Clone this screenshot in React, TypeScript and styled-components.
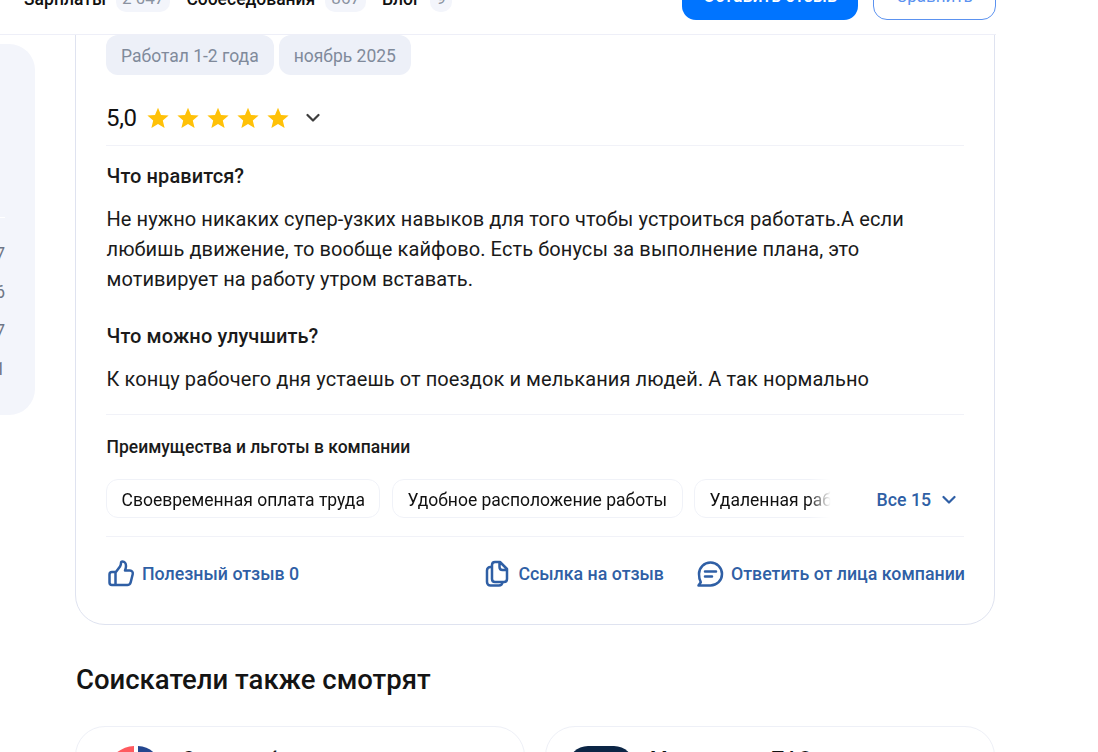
import React from "react";
import styled, { createGlobalStyle } from "styled-components";

const benefits = [
  "Своевременная оплата труда",
  "Удобное расположение работы",
  "Удаленная работа",
];

const tabs = [
  { name: "Зарплаты", count: "2 047" },
  { name: "Собеседования", count: "867" },
  { name: "Блог", count: "9" },
];

const Star = () => (
  <svg width="22" height="22" viewBox="0 0 22 22">
    <path
      d="M11 .8l3 7.100 7.600.6-5.800 5 1.800 7.500L11 16.900 4.400 21l1.800-7.500-5.800-5L8 7.900z"
      fill="#ffc107"
    />
  </svg>
);

const Chevron = ({ color }: { color: string }) => (
  <svg width="14" height="10" viewBox="0 0 14 10" fill="none">
    <path
      d="M1.500 2l5.500 5.500L12.500 2"
      stroke={color}
      strokeWidth="2.200"
      strokeLinecap="round"
      strokeLinejoin="round"
    />
  </svg>
);

const ThumbIcon = () => (
  <svg width="28" height="28" viewBox="0 0 28 28" fill="none">
    <path
      d="M8.500 12.500l4.500-6c.6-1 1-2.200 1-3.500 0-1 .7-1.500 1.500-1.500 2 0 3.500 2 3.500 4.500 0 1.500-.4 3-1 4.500h5c2 0 3.200 1.800 2.700 3.700l-2 8c-.4 1.500-1.700 2.800-3.400 2.800H5c-1.400 0-2.500-1.100-2.500-2.500v-8c0-1.400 1.100-2.500 2.500-2.500h3.500v13"
      stroke="#2f5fa5"
      strokeWidth="2.500"
      strokeLinejoin="round"
    />
  </svg>
);

const CopyIcon = () => (
  <svg width="28" height="28" viewBox="0 0 28 28" fill="none">
    <path
      d="M9 5c0-1.700 1.300-3 3-3h5l7 7v10c0 1.700-1.300 3-3 3H12c-1.700 0-3-1.300-3-3zM16.500 2.500V7c0 1.700 1.300 3 3 3H24M9 7H7.500C5.500 7 4 8.500 4 10.500V22c0 2 1.500 3.500 3.500 3.500H16c2 0 3.500-1.500 3.500-3.500v-.5"
      stroke="#2f5fa5"
      strokeWidth="2.500"
      strokeLinejoin="round"
    />
  </svg>
);

const CommentIcon = () => (
  <svg width="28" height="28" viewBox="0 0 28 28" fill="none">
    <path
      d="M14.500 2.500c6.300 0 11.500 4.900 11.500 11.500s-5.200 11.500-11.500 11.500H2.500l2.300-3.300C3.600 20.300 3 17.200 3 14 3 7.400 8.200 2.500 14.500 2.500z"
      stroke="#2f5fa5"
      strokeWidth="2.500"
      strokeLinejoin="round"
    />
    <path
      d="M9 11.500h11M9 16.500h7"
      stroke="#2f5fa5"
      strokeWidth="2.500"
      strokeLinecap="round"
    />
  </svg>
);

const BankLogo = () => (
  <LogoSvg width="60" height="60" viewBox="0 0 60 60">
    <path d="M28 0v30H0C0 13 12 1 28 0z" fill="#ff5a5f" />
    <path d="M32 0c7 .5 13 3 17 8L32 24z" fill="#24478f" />
  </LogoSvg>
);

const App: React.FC = () => {
  return (
    <>
      <GlobalStyle />
      <Page>
        <TopBar>
          <Tabs>
            {tabs.map((tab) => (
              <Tab key={tab.name}>
                <TabName>{tab.name}</TabName>
                <TabCount>{tab.count}</TabCount>
              </Tab>
            ))}
          </Tabs>
          <Actions>
            <PrimaryButton>Оставить отзыв</PrimaryButton>
            <OutlineButton>Сравнить</OutlineButton>
          </Actions>
        </TopBar>

        <Columns>
          <Sidebar>
            <SideLine />
            <SideNumbers>
              <span>7</span>
              <span>6</span>
              <span>7</span>
              <span>1</span>
            </SideNumbers>
          </Sidebar>

          <Main>
            <ReviewCard>
              <Tags>
                <Tag>Работал 1-2 года</Tag>
                <Tag>ноябрь 2025</Tag>
              </Tags>

              <Rating>
                <Score>5,0</Score>
                <Stars>
                  <Star />
                  <Star />
                  <Star />
                  <Star />
                  <Star />
                </Stars>
                <RatingToggle>
                  <Chevron color="#3d3d3d" />
                </RatingToggle>
              </Rating>

              <Section>
                <Question>Что нравится?</Question>
                <Answer>
                  Не нужно никаких супер-узких навыков для того чтобы устроиться
                  работать.А если любишь движение, то вообще кайфово. Есть бонусы
                  за выполнение плана, это мотивирует на работу утром вставать.
                </Answer>
                <Question>Что можно улучшить?</Question>
                <Answer>
                  К концу рабочего дня устаешь от поездок и мелькания людей. А
                  так нормально
                </Answer>
              </Section>

              <Benefits>
                <BenefitsTitle>Преимущества и льготы в компании</BenefitsTitle>
                <BenefitsRow>
                  <BenefitsList>
                    {benefits.map((item) => (
                      <Benefit key={item}>{item}</Benefit>
                    ))}
                  </BenefitsList>
                  <AllLink>
                    Все 15
                    <Chevron color="#2f5fa5" />
                  </AllLink>
                </BenefitsRow>
              </Benefits>

              <Footer>
                <FooterLink>
                  <ThumbIcon />
                  Полезный отзыв 0
                </FooterLink>
                <FooterRight>
                  <FooterLink>
                    <CopyIcon />
                    Ссылка на отзыв
                  </FooterLink>
                  <FooterLink>
                    <CommentIcon />
                    Ответить от лица компании
                  </FooterLink>
                </FooterRight>
              </Footer>
            </ReviewCard>

            <SimilarTitle>Соискатели также смотрят</SimilarTitle>
            <SimilarGrid>
              <SimilarCard>
                <BankLogo />
                <SimilarName>Сервис обмена</SimilarName>
              </SimilarCard>
              <SimilarCard>
                <DarkLogo />
                <SimilarName>Мегамаркет ПАО</SimilarName>
              </SimilarCard>
            </SimilarGrid>
          </Main>
        </Columns>
      </Page>
    </>
  );
};

export default App;

const GlobalStyle = createGlobalStyle`
  html, body {
    margin: 0;
    padding: 0;
    background: #ffffff;
  }

  body {
    font-family: Roboto, "Noto Sans", sans-serif;
    color: #111111;
  }
`;

const Page = styled("div")`
  width: 1098px;
  height: 752px;
  overflow: hidden;
`;

const TopBar = styled("div")`
  position: relative;
  z-index: 1;
  display: flex;
  justify-content: space-between;
  align-items: flex-end;
  box-sizing: border-box;
  width: 996px;
  height: 35px;
  padding: 0 0 14px 24px;
  background: #ffffff;
  border-bottom: 1px solid #eeeff8;
`;

const Tabs = styled("div")`
  display: flex;
  gap: 16px;
  margin-bottom: 8px;
`;

const Tab = styled("div")`
  display: flex;
  align-items: center;
  gap: 10px;
`;

const TabName = styled("span")`
  padding-top: 6px;
  font-size: 17.500px;
  font-weight: 500;
  line-height: 24px;
`;

const TabCount = styled("span")`
  padding: 6px 6px 2px;
  border-radius: 10px;
  background: #f3f5fb;
  color: #8a92a0;
  font-size: 17px;
  line-height: 24px;
`;

const Actions = styled("div")`
  display: flex;
  gap: 15px;
`;

const PrimaryButton = styled("div")`
  box-sizing: border-box;
  width: 176px;
  height: 44px;
  border-radius: 14px;
  background: #0074ff;
  color: #ffffff;
  font-size: 17.600px;
  font-weight: 500;
  line-height: 40px;
  text-align: center;
`;

const OutlineButton = styled("div")`
  box-sizing: border-box;
  width: 123px;
  height: 44px;
  border: 1px solid #5b92f0;
  border-radius: 14px;
  color: #5b92f0;
  font-size: 17px;
  line-height: 38px;
  text-align: center;
`;

const Columns = styled("div")`
  display: flex;
  align-items: flex-start;
  gap: 40px;
  margin-left: -285px;
  margin-top: -40px;
`;

const Sidebar = styled("aside")`
  display: flex;
  flex-direction: column;
  flex: none;
  box-sizing: border-box;
  width: 320px;
  height: 371px;
  margin-top: 49px;
  padding-top: 173px;
  border-radius: 26px;
  background: #f3f5fb;
`;

const SideLine = styled("div")`
  width: 290px;
  height: 1px;
  background: #ffffff;
`;

const SideNumbers = styled("div")`
  display: flex;
  flex-direction: column;
  align-items: flex-end;
  gap: 16.300px;
  width: 290px;
  margin-top: 25px;
  color: #6e7686;
  font-size: 17.500px;
  line-height: 22px;
`;

const Main = styled("main")`
  flex: none;
  width: 920px;
`;

const ReviewCard = styled("section")`
  box-sizing: border-box;
  height: 630px;
  padding: 39px 30px 0;
  border: 1px solid #dfe3f0;
  border-radius: 30px;
`;

const Tags = styled("div")`
  display: flex;
  gap: 5px;
`;

const Tag = styled("span")`
  height: 40px;
  padding: 0 15px;
  border-radius: 12px;
  background: #edf0f8;
  color: #808a9b;
  font-size: 17.500px;
  line-height: 42px;
`;

const Rating = styled("div")`
  display: flex;
  align-items: center;
  height: 54px;
  padding-top: 16px;
  border-bottom: 1px solid #f1f2f8;
`;

const Score = styled("span")`
  width: 41px;
  font-size: 24px;
  line-height: 28px;
  letter-spacing: -0.3px;
`;

const Stars = styled("div")`
  display: flex;
  gap: 8px;
`;

const RatingToggle = styled("span")`
  display: flex;
  margin-left: 17px;
`;

const Section = styled("div")`
  height: 269px;
  padding-top: 16px;
  box-sizing: border-box;
  border-bottom: 1px solid #f1f2f8;
`;

const Question = styled("h3")`
  margin: 0 0 14px;
  padding-left: 0.5px;
  font-size: 20px;
  font-weight: 500;
  line-height: 28px;
  letter-spacing: 0.1px;
  color: #1a1a1a;
`;

const Answer = styled("p")`
  margin: 0 0 28px;
  padding-left: 0.5px;
  font-size: 20px;
  line-height: 30px;
  letter-spacing: 0.09px;
  color: #1a1a1a;
`;

const Benefits = styled("div")`
  height: 122px;
  box-sizing: border-box;
  padding-top: 21px;
  border-bottom: 1px solid #f1f2f8;
`;

const BenefitsTitle = styled("h4")`
  margin: 0 0 21px;
  padding-left: 0.5px;
  font-size: 17.500px;
  font-weight: 500;
  line-height: 22px;
  color: #1a1a1a;
`;

const BenefitsRow = styled("div")`
  display: flex;
  align-items: center;
  justify-content: space-between;
`;

const BenefitsList = styled("div")`
  display: flex;
  gap: 11.500px;
  width: 732px;
  overflow: hidden;
  mask-image: linear-gradient(to right, #000 96%, transparent 99%);
`;

const Benefit = styled("span")`
  flex: none;
  padding: 2px 14.500px 0;
  height: 35px;
  border: 1px solid #f0f2f8;
  border-radius: 12px;
  font-size: 17.500px;
  line-height: 37px;
`;

const AllLink = styled("span")`
  display: flex;
  align-items: center;
  gap: 11px;
  margin-right: 8px;
  padding-top: 2px;
  color: #2f5fa5;
  font-size: 17.700px;
  font-weight: 500;
  line-height: 24px;
`;

const Footer = styled("div")`
  display: flex;
  justify-content: space-between;
  align-items: center;
  height: 74px;
  padding-left: 1px;
  margin-right: -1px;
`;

const FooterRight = styled("div")`
  display: flex;
  gap: 32px;
`;

const FooterLink = styled("span")`
  display: flex;
  align-items: center;
  gap: 7px;
  color: #2f5fa5;
  font-size: 17.800px;
  font-weight: 500;
  line-height: 28px;
`;

const SimilarTitle = styled("h2")`
  margin: 37px 0 28px;
  padding-left: 1px;
  font-size: 27.500px;
  font-weight: 500;
  line-height: 36px;
  color: #141414;
`;

const SimilarGrid = styled("div")`
  display: grid;
  grid-template-columns: 450px 450px;
  gap: 20px;
`;

const SimilarCard = styled("div")`
  display: flex;
  gap: 16px;
  height: 120px;
  box-sizing: border-box;
  padding: 19px 22px;
  border: 1px solid #eef0f7;
  border-radius: 30px;
`;

const LogoSvg = styled("svg")`
  flex: none;
  margin-left: 8px;
`;

const DarkLogo = styled("div")`
  width: 66px;
  height: 60px;
  border-radius: 20px;
  background: #0b2545;
`;

const SimilarName = styled("span")`
  font-size: 20px;
  font-weight: 500;
  line-height: 26px;
`;
